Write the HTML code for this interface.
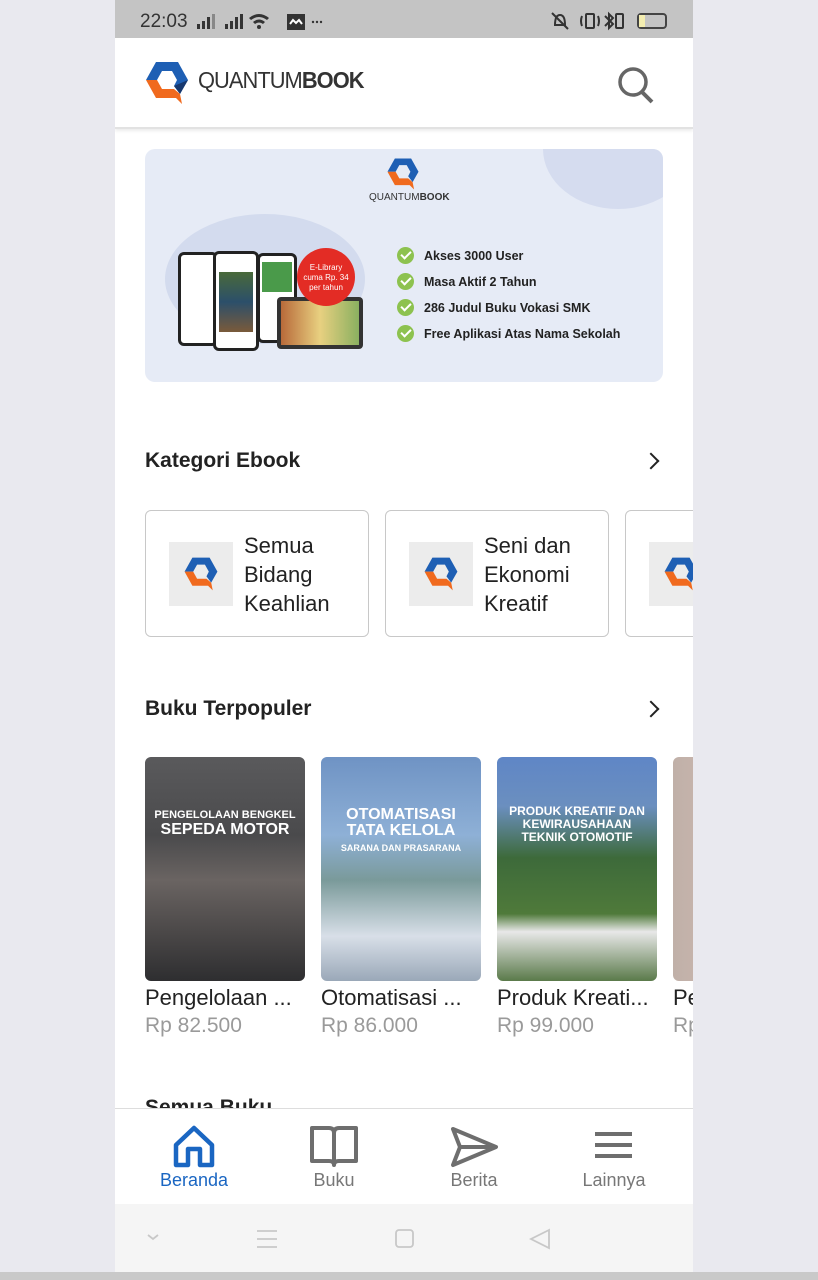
<!DOCTYPE html>
<html><head><meta charset="utf-8"><style>
*{margin:0;padding:0;box-sizing:border-box}
body{width:818px;height:1280px;background:#e9e9ef;font-family:"Liberation Sans",Roboto,sans-serif;position:relative;overflow:hidden}
.ph{position:absolute;left:115px;top:0;width:578px;height:1280px;background:#fff;overflow:hidden}
.sb{position:absolute;left:0;top:0;width:578px;height:38px;background:#c4c4c4;color:#333;font-size:19px}
.hd{position:absolute;top:38px;left:0;width:578px;height:91px;background:#fff;border-bottom:2px solid #e2e2e2;box-shadow:0 2px 3px rgba(0,0,0,.08)}
.ban{position:absolute;left:30px;top:149px;width:518px;height:233px;background:#e6ebf6;border-radius:10px;overflow:hidden}
.h2{position:absolute;left:30px;font-size:21px;font-weight:bold;color:#222}
.chev{position:absolute;right:36px;width:12px;height:12px;border-right:2.5px solid #222;border-top:2.5px solid #222;transform:rotate(45deg)}
.cat{position:absolute;top:510px;width:224px;height:127px;border:1.5px solid #c8c8c8;border-radius:6px;background:#fff}
.cat .ic{position:absolute;left:23px;top:31px;width:64px;height:64px;background:#ececec}
.cat .t{position:absolute;left:98px;top:20px;font-size:22px;line-height:29px;color:#222}
.bk{position:absolute;top:757px;width:160px;height:224px;border-radius:6px;overflow:hidden}
.bt{position:absolute;top:985px;font-size:22px;color:#222;white-space:nowrap}
.bp{position:absolute;top:1014px;font-size:21px;color:#9a9a9a}
.nav{position:absolute;top:1108px;left:0;width:578px;height:96px;background:#fff;border-top:1.5px solid #ddd}
.nv{position:absolute;top:1170px;font-size:18px;color:#777;transform:translateX(-50%)}
.sys{position:absolute;top:1204px;left:0;width:578px;height:68px;background:#f5f5f5}
.ck{display:inline-block;width:17px;height:17px;border-radius:50%;background:#8dc24f;vertical-align:-4px;margin-right:10px;position:relative}
.ck:after{content:"";position:absolute;left:4px;top:4px;width:8px;height:4px;border-left:2px solid #fff;border-bottom:2px solid #fff;transform:rotate(-45deg)}
</style></head><body>
<div class="ph">
<div class="sb"><span style="position:absolute;left:25px;top:11px">22:03</span>
<svg style="position:absolute;left:82px;top:12px" width="130" height="20"><g fill="#333"><rect x="0" y="12" width="3" height="5"/><rect x="5" y="9" width="3" height="8"/><rect x="10" y="5" width="3" height="12"/><rect x="15" y="2" width="3" height="15" fill="#888"/><rect x="28" y="12" width="3" height="5"/><rect x="33" y="9" width="3" height="8"/><rect x="38" y="5" width="3" height="12"/><rect x="43" y="2" width="3" height="15"/><path d="M52 6 Q62 -2 72 6 L70 8 Q62 2 54 8Z M56 10 Q62 5 68 10 L66 12 Q62 9 58 12Z"/><circle cx="62" cy="15" r="2"/><rect x="90" y="2" width="18" height="16"/><circle cx="116" cy="10" r="1.2"/><circle cx="120" cy="10" r="1.2"/><circle cx="124" cy="10" r="1.2"/></g><path d="M93 12 l3-4 3 3 3-3 3 4" stroke="#fff" stroke-width="2" fill="none"/></svg>
<svg style="position:absolute;left:434px;top:10px" width="85" height="22"><g fill="none" stroke="#333" stroke-width="2"><path d="M6 15 Q6 5 11 5 Q16 5 16 15 Z"/><path d="M3 3 L19 19"/><rect x="37" y="4" width="8" height="14" rx="1"/><path d="M33 6 Q31 11 33 16 M49 6 Q51 11 49 16"/><path d="M56 6 L64 14 L60 18 V4 L64 8 L56 16"/><rect x="67" y="4" width="7" height="14" rx="1"/></g></svg>
<div style="position:absolute;left:522px;top:13px;width:30px;height:16px;border:2px solid #444;border-radius:4px"><div style="width:6px;height:100%;background:#f3edb0"></div></div>
</div>
<div class="hd">
<svg style="position:absolute;left:29px;top:22px" width="46" height="46" viewBox="0 0 46 46"><path d="M12 2 H34 L44 20 L36 34 L30 26 L33 20 L28 11 H18 L13 20 L2 20Z" fill="#1e5fb4"/><path d="M44 20 L36 34 L30 26Z" fill="#17386e"/><path d="M2 20 L13 20 L18 29 H30 L36 34 L38 44 L32 38 H12Z" fill="#f06a1e"/></svg>
<div style="position:absolute;left:83px;top:29px;font-size:23px;color:#333;letter-spacing:-1px;transform:scaleX(.95);transform-origin:left">QUANTUM<b>BOOK</b></div>
<svg style="position:absolute;left:502px;top:28px" width="38" height="40"><circle cx="16" cy="16" r="13" stroke="#666" stroke-width="3.5" fill="none"/><path d="M25 26 L35 36" stroke="#666" stroke-width="4"/></svg>
</div>
<div class="ban">
<div style="position:absolute;right:-30px;top:-60px;width:150px;height:120px;border-radius:50%;background:#d5dcef"></div>
<svg style="position:absolute;left:241px;top:8px" width="34" height="34" viewBox="0 0 46 46"><path d="M12 2 H34 L44 20 L36 34 L30 26 L33 20 L28 11 H18 L13 20 L2 20Z" fill="#1e5fb4"/><path d="M2 20 L13 20 L18 29 H30 L36 34 L38 44 L32 38 H12Z" fill="#f06a1e"/></svg>
<div style="position:absolute;left:224px;top:43px;font-size:10px;color:#333">QUANTUM<b>BOOK</b></div>
<div style="position:absolute;left:20px;top:65px;width:200px;height:130px;border-radius:50%;background:#d3dbee"></div>
<div style="position:absolute;left:33px;top:103px;width:40px;height:94px;background:#fff;border:3px solid #222;border-radius:6px"></div>
<div style="position:absolute;left:68px;top:102px;width:46px;height:100px;background:#fff;border:3px solid #222;border-radius:6px"><div style="margin:18px 3px;height:60px;background:linear-gradient(#4a6a3a,#2c4f6a,#7a5a3a)"></div></div>
<div style="position:absolute;left:112px;top:104px;width:40px;height:90px;background:#fff;border:3px solid #222;border-radius:6px"><div style="margin:6px 2px;height:30px;background:#4a9a4a"></div></div>
<div style="position:absolute;left:132px;top:148px;width:86px;height:52px;background:#333;border-radius:4px;padding:4px"><div style="height:100%;background:linear-gradient(90deg,#b86a3a,#e8d080,#8ab060)"></div></div>
<div style="position:absolute;left:152px;top:99px;width:58px;height:58px;border-radius:50%;background:#e32c25;color:#fff;font-size:8px;text-align:center;line-height:10px;padding-top:15px">E-Library<br>cuma Rp. 34<br>per tahun</div>
<div style="position:absolute;left:252px;top:94px;font-size:12.5px;font-weight:bold;color:#222;line-height:26px">
<div><span class="ck"></span>Akses 3000 User</div><div><span class="ck"></span>Masa Aktif 2 Tahun</div><div><span class="ck"></span>286 Judul Buku Vokasi SMK</div><div><span class="ck"></span>Free Aplikasi Atas Nama Sekolah</div></div>
</div>
<div class="h2" style="top:449px">Kategori Ebook</div><div class="chev" style="top:455px"></div>
<div class="cat" style="left:30px"><div class="ic"><svg style="margin:14px" width="36" height="36" viewBox="0 0 46 46"><path d="M12 2 H34 L44 20 L36 34 L30 26 L33 20 L28 11 H18 L13 20 L2 20Z" fill="#1e5fb4"/><path d="M2 20 L13 20 L18 29 H30 L36 34 L38 44 L32 38 H12Z" fill="#f06a1e"/></svg></div><div class="t">Semua<br>Bidang<br>Keahlian</div></div>
<div class="cat" style="left:270px"><div class="ic"><svg style="margin:14px" width="36" height="36" viewBox="0 0 46 46"><path d="M12 2 H34 L44 20 L36 34 L30 26 L33 20 L28 11 H18 L13 20 L2 20Z" fill="#1e5fb4"/><path d="M2 20 L13 20 L18 29 H30 L36 34 L38 44 L32 38 H12Z" fill="#f06a1e"/></svg></div><div class="t">Seni dan<br>Ekonomi<br>Kreatif</div></div>
<div class="cat" style="left:510px"><div class="ic"><svg style="margin:14px" width="36" height="36" viewBox="0 0 46 46"><path d="M12 2 H34 L44 20 L36 34 L30 26 L33 20 L28 11 H18 L13 20 L2 20Z" fill="#1e5fb4"/><path d="M2 20 L13 20 L18 29 H30 L36 34 L38 44 L32 38 H12Z" fill="#f06a1e"/></svg></div></div>
<div class="h2" style="top:697px">Buku Terpopuler</div><div class="chev" style="top:703px"></div>
<div class="bk" style="left:30px;background:linear-gradient(#5a5a5c 0%,#4a4a4c 35%,#6a6462 55%,#2e2e30 100%)"><div style="color:#fff;font-weight:bold;text-align:center;margin-top:52px;font-size:11px">PENGELOLAAN BENGKEL<br><span style="font-size:16px">SEPEDA MOTOR</span></div></div>
<div class="bk" style="left:206px;background:linear-gradient(#6f93c4 0%,#8eb0d6 35%,#7a9a9a 55%,#d8dfe8 80%,#9aa8b8 100%)"><div style="color:#fff;font-weight:bold;text-align:center;margin-top:50px;font-size:16px;line-height:16px">OTOMATISASI<br>TATA KELOLA<br><span style="font-size:9px">SARANA DAN PRASARANA</span></div></div>
<div class="bk" style="left:382px;background:linear-gradient(#5f86c6 0%,#6b8fbf 22%,#3d6a3a 45%,#4f7a3a 70%,#e8e8e8 78%,#5a7a4a 100%)"><div style="color:#fff;font-weight:bold;text-align:center;margin-top:48px;font-size:12px;line-height:13px">PRODUK KREATIF DAN<br>KEWIRAUSAHAAN<br>TEKNIK OTOMOTIF</div></div>
<div class="bk" style="left:558px;background:linear-gradient(90deg,#c0b0a8,#e6c8c0)"></div>
<div class="bt" style="left:30px">Pengelolaan ...</div><div class="bp" style="left:30px">Rp 82.500</div>
<div class="bt" style="left:206px">Otomatisasi ...</div><div class="bp" style="left:206px">Rp 86.000</div>
<div class="bt" style="left:382px">Produk Kreati...</div><div class="bp" style="left:382px">Rp 99.000</div>
<div class="bt" style="left:558px">Pe</div><div class="bp" style="left:558px">Rp</div>
<div class="h2" style="top:1096px">Semua Buku</div>
<div class="nav">
<svg style="position:absolute;left:56px;top:14px" width="46" height="48"><path d="M5 22 L23 5 L41 22 V42 H29 V26 H17 V42 H5Z" fill="none" stroke="#1a66c2" stroke-width="4.5" stroke-linejoin="round"/></svg>
<svg style="position:absolute;left:194px;top:16px" width="50" height="44"><path d="M3 3 H20 Q25 3 25 8 V40 Q25 36 20 36 H3Z M47 3 H30 Q25 3 25 8 V40 Q25 36 30 36 H47Z" fill="none" stroke="#6e6e6e" stroke-width="4" stroke-linejoin="round"/></svg>
<svg style="position:absolute;left:333px;top:16px" width="52" height="44"><path d="M5 4 L48 22 L5 40 L12 22Z M12 22 H48" fill="none" stroke="#6e6e6e" stroke-width="4" stroke-linejoin="round"/></svg>
<svg style="position:absolute;left:480px;top:23px" width="38" height="30"><g fill="#6e6e6e"><rect y="0" width="37" height="4"/><rect y="11" width="37" height="4"/><rect y="22" width="37" height="4"/></g></svg>
</div>
<div class="nv" style="left:79px;color:#1a66c2">Beranda</div>
<div class="nv" style="left:219px">Buku</div>
<div class="nv" style="left:359px">Berita</div>
<div class="nv" style="left:499px">Lainnya</div>
<div class="sys">
<svg width="578" height="68"><g fill="none" stroke="#c8c8c8" stroke-width="1.8"><path d="M33 31 l5 4 5-4"/><path d="M142 27 h20 M142 35 h20 M142 43 h20"/><rect x="281" y="26" width="17" height="17" rx="3"/><path d="M434 26 L416 35 L434 44Z"/></g></svg>
</div>
</div>
<div style="position:absolute;left:0;top:1272px;width:818px;height:8px;background:#c9c9c9"></div>
</body></html>
